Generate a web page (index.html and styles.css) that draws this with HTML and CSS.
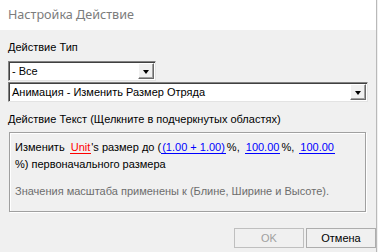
FILE: index.html
```html
<!DOCTYPE html>
<html lang="ru">
<head>
<meta charset="utf-8">
<link rel="stylesheet" href="styles.css">
</head>
<body>
<div class="window">
  <div class="titlebar">Настройка Действие</div>
  <div class="client">
    <div class="label label-type">Действие Тип</div>
    <div class="combo combo-short">
      <span class="combo-text">- Все</span>
      <span class="combo-btn"><span class="arrow"></span></span>
    </div>
    <div class="combo combo-long">
      <span class="combo-text">Анимация - Изменить Размер Отряда</span>
      <span class="combo-btn"><span class="arrow"></span></span>
    </div>
    <div class="label label-text">Действие Текст (Щелкните в подчеркнутых областях)</div>
    <div class="textbox">
      <div class="line">Изменить <span class="link red lead">Unit</span>'s размер до (<span class="link blue">(1.00 + 1.00)</span><span class="pct">%,</span> <span class="link blue lead">100.00</span><span class="pct">%,</span> <span class="link blue lead">100.00</span></div>
      <div class="line">%) первоначального размера</div>
      <div class="note">Значения масштаба применены к (Блине, Ширине и Высоте).</div>
    </div>
    <div class="buttons">
      <div class="btn disabled">OK</div>
      <div class="btn">Отмена</div>
    </div>
  </div>
</div>
</body>
</html>
```
FILE: styles.css
```css
html, body {
  margin: 0;
  padding: 0;
}
body {
  width: 378px;
  height: 252px;
  overflow: hidden;
  background: #f0f0f0;
  font-family: "Liberation Sans", Arial, sans-serif;
  font-size: 11px;
  color: #000;
}
.window {
  width: 377px;
  height: 252px;
  border-right: 1px solid #b9b9b9;
  box-sizing: border-box;
  display: flex;
  flex-direction: column;
}
.titlebar {
  height: 30px;
  background: #fff;
  color: #7c7c7c;
  font-family: "Noto Sans", "Open Sans", sans-serif;
  font-size: 12.6px;
  line-height: 30px;
  padding-left: 8px;
}
.client {
  padding-left: 8px;
  display: flex;
  flex-direction: column;
}
.label {
  line-height: 13px;
}
.label-type {
  margin-top: 11px;
}
.combo {
  height: 20px;
  box-sizing: border-box;
  background: #fff;
  border-top: 1px solid #828282;
  border-left: 1px solid #828282;
  border-right: 1px solid #e3e3e3;
  border-bottom: 1px solid #e3e3e3;
  box-shadow: inset 1px 1px 0 #404040;
  display: flex;
  align-items: stretch;
  padding: 1px 1px 1px 2px;
}
.combo-short {
  width: 148px;
  margin-top: 7px;
}
.combo-long {
  width: 360px;
  margin-top: 1px;
}
.combo-text {
  flex: 1;
  line-height: 16px;
  padding-left: 1px;
}
.combo-btn {
  width: 14px;
  background: #f0f0f0;
  border-top: 1px solid #fff;
  border-left: 1px solid #fff;
  border-right: 1px solid #696969;
  border-bottom: 1px solid #696969;
  box-shadow: inset -1px -1px 0 #a0a0a0;
  display: flex;
  align-items: center;
  justify-content: center;
}
.arrow {
  width: 0;
  height: 0;
  border-left: 3.5px solid transparent;
  border-right: 3.5px solid transparent;
  border-top: 4px solid #000;
  margin-top: 1px;
}
.label-text {
  margin-top: 11px;
}
.textbox {
  margin-top: 6px;
  margin-left: 1px;
  width: 357px;
  height: 80px;
  box-sizing: border-box;
  border: 1px solid #a0a0a0;
  box-shadow: inset 1px 1px 0 #fff, 1px 1px 0 #fff;
  padding: 6px 0 0 5px;
}
.line {
  line-height: 17px;
  white-space: nowrap;
}
.link {
  padding: 0 1px;
}
.link.lead {
  margin-left: 2px;
}
.pct {
  margin-left: 1px;
}
.red {
  color: #ff0000;
  border-bottom: 1px solid #ff0000;
}
.blue {
  color: #0000ff;
  border-bottom: 1px solid #0000ff;
}
.note {
  margin-top: 12px;
  line-height: 13px;
  color: #6d6d6d;
}
.buttons {
  margin-top: 16px;
  display: flex;
  justify-content: flex-end;
  gap: 2px;
}
.btn {
  width: 70px;
  height: 20px;
  box-sizing: border-box;
  border: 1px solid #adadad;
  background: #f0f0f0;
  text-align: center;
  line-height: 18px;
}
.btn.disabled {
  color: #a0a0a0;
  border-color: #bfbfbf;
}
```
